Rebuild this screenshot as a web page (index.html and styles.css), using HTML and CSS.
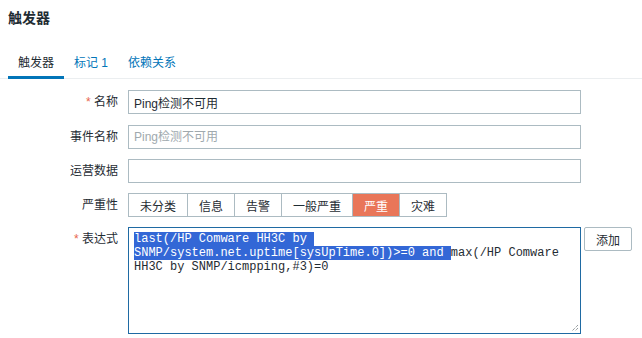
FILE: index.html
```html
<!DOCTYPE html>
<html lang="zh-CN">
<head>
<meta charset="UTF-8">
<title>触发器</title>
<link rel="stylesheet" href="styles.css">
</head>
<body>
<div class="header">
    <h1>触发器</h1>
</div>

<ul class="tabs">
    <li class="tab active"><a>触发器</a></li>
    <li class="tab"><a>标记 1</a></li>
    <li class="tab"><a>依赖关系</a></li>
</ul>

<div class="form">
    <div class="row row-first">
        <label class="label"><span class="req">*</span> 名称</label>
        <input class="field" type="text" value="Ping检测不可用">
    </div>
    <div class="row">
        <label class="label">事件名称</label>
        <input class="field" type="text" placeholder="Ping检测不可用">
    </div>
    <div class="row">
        <label class="label">运营数据</label>
        <input class="field" type="text">
    </div>
    <div class="row">
        <label class="label">严重性</label>
        <div class="severity">
            <button>未分类</button>
            <button>信息</button>
            <button>告警</button>
            <button>一般严重</button>
            <button class="high">严重</button>
            <button>灾难</button>
        </div>
    </div>
    <div class="row row-top">
        <label class="label label-top"><span class="req">*</span> 表达式</label>
        <div class="expr-wrap">
            <div class="expr"><span class="sel">last(/HP Comware HH3C by SNMP/system.net.uptime[sysUpTime.0])&gt;=0 and </span>max(/HP Comware HH3C by SNMP/icmpping,#3)=0<svg class="grip" width="9" height="9" viewBox="0 0 9 9"><path d="M8 2 L2 8 M8 5 L5 8" stroke="#6b7478" stroke-width="1" stroke-dasharray="1 1" fill="none"/></svg></div>
            <button class="add-btn">添加</button>
        </div>
    </div>
</div>
</body>
</html>
```

FILE: styles.css
```css
body {
    margin: 0;
    background: #fff;
    color: #1f2c33;
    font-family: "Liberation Sans", Arial, "Noto Sans CJK SC", sans-serif;
    font-size: 12px;
}
.header {
    padding: 8px 8px 0;
}
.header h1 {
    margin: 0;
    font-size: 14px;
    line-height: 20px;
    font-weight: bold;
    color: #1f2c33;
}
.tabs {
    list-style: none;
    margin: 22px 0 0;
    padding: 0 0 0 8px;
    display: flex;
    border-bottom: 1px solid #ebeef0;
}
.tab a {
    display: block;
    padding: 6px 10px 6px;
    line-height: 14px;
    color: #0275b8;
    border-bottom: 3px solid transparent;
    margin-bottom: -1px;
}
.tab.active a {
    color: #1f2c33;
    border-bottom-color: #0275b8;
}
.form {
    padding-top: 11px;
    display: flex;
    flex-direction: column;
    gap: 10px;
}
.row {
    display: grid;
    grid-template-columns: 118px auto;
    column-gap: 10px;
    align-items: center;
}
.row-first {
    margin-bottom: 1px;
}
.row-top {
    align-items: start;
}
.label {
    text-align: right;
    line-height: 14px;
}
.label-top {
    padding-top: 5px;
}
.req {
    color: #e8654d;
}
.field {
    width: 453px;
    height: 24px;
    box-sizing: border-box;
    margin: 0;
    padding: 0 5px;
    border: 1px solid #acbbc2;
    font-family: "Liberation Sans", Arial, "Noto Sans CJK SC", sans-serif;
    font-size: 12px;
    color: #1f2c33;
    outline: none;
}
.field::placeholder {
    color: #a0a9ae;
}
.severity {
    display: flex;
}
.severity button {
    height: 24px;
    margin: 0 0 0 -1px;
    padding: 0 11px;
    background: #fff;
    border: 1px solid #acbbc2;
    font-family: "Liberation Sans", Arial, "Noto Sans CJK SC", sans-serif;
    font-size: 12px;
    color: #1f2c33;
}
.severity button:first-child {
    margin-left: 0;
}
.severity button.high {
    background: #e97659;
    color: #fff;
    position: relative;
}
.expr-wrap {
    display: flex;
    gap: 3px;
    align-items: flex-start;
}
.expr {
    position: relative;
    width: 453px;
    height: 107px;
    box-sizing: border-box;
    padding: 4px 5px;
    border: 1px solid #1f6aa3;
    font-family: "Liberation Mono", "Courier New", monospace;
    font-size: 12px;
    line-height: 14px;
    white-space: pre-wrap;
    word-wrap: break-word;
    color: #1f2c33;
}
.sel {
    background: #3367d6;
    color: #fff;
}
.grip {
    position: absolute;
    right: 1px;
    bottom: 1px;
}
.add-btn {
    height: 24px;
    padding: 0 11px;
    margin: 0;
    background: #fff;
    border: 1px solid #acbbc2;
    border-radius: 2px;
    font-family: "Liberation Sans", Arial, "Noto Sans CJK SC", sans-serif;
    font-size: 12px;
    color: #1f2c33;
}
```
